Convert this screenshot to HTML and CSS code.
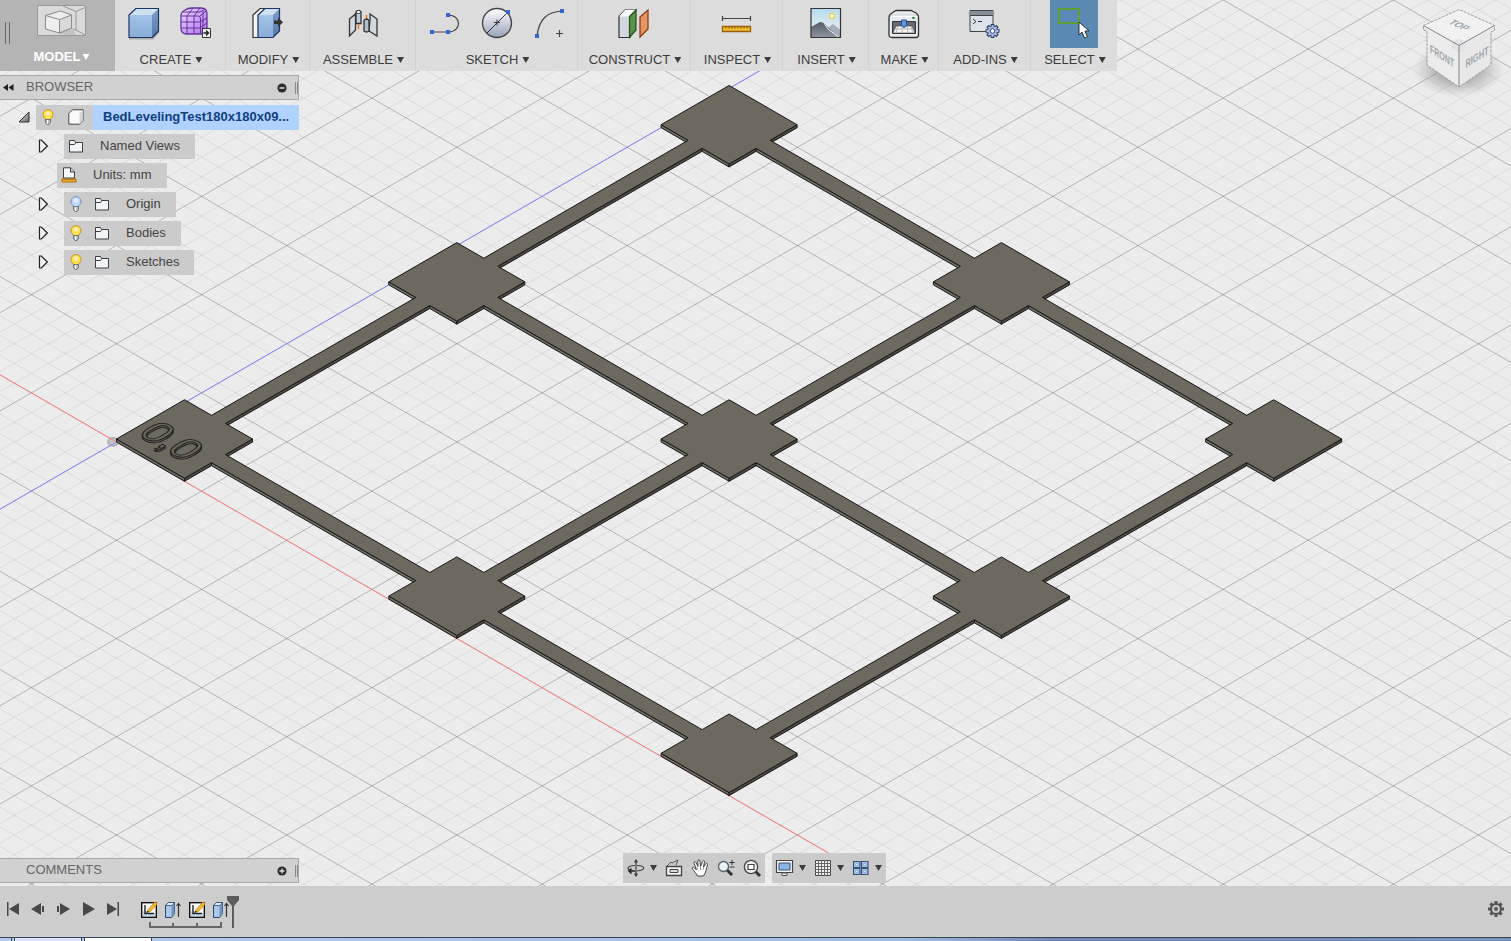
FILE: index.html
```html
<!DOCTYPE html>
<html lang="en">
<head>
<meta charset="utf-8">
<title>BedLevelingTest180x180x09</title>
<link rel="stylesheet" href="styles.css">
</head>
<body>
<svg class="defs" width="0" height="0" aria-hidden="true">
  <defs>
    <linearGradient id="blueFace" x1="0" y1="0" x2="0" y2="1"><stop offset="0" stop-color="#a3c3e8"/><stop offset="1" stop-color="#87add9"/></linearGradient>
    <linearGradient id="blueSide" x1="0" y1="0" x2="0" y2="1"><stop offset="0" stop-color="#7d9fcb"/><stop offset="1" stop-color="#5878a6"/></linearGradient>
    <linearGradient id="steel" x1="0" y1="0" x2="0" y2="1"><stop offset="0" stop-color="#ffffff"/><stop offset="1" stop-color="#98a2b8"/></linearGradient>
    <linearGradient id="purple" x1="0" y1="0" x2="1" y2="1"><stop offset="0" stop-color="#eedcff"/><stop offset=".45" stop-color="#d0a9fa"/><stop offset="1" stop-color="#b070f0"/></linearGradient>
    <linearGradient id="sky" x1="0" y1="0" x2="0" y2="1"><stop offset="0" stop-color="#b4dcf2"/><stop offset="1" stop-color="#f5f4e6"/></linearGradient>
    <linearGradient id="rock" x1="0" y1="0" x2="0" y2="1"><stop offset="0" stop-color="#565a66"/><stop offset="1" stop-color="#8f95a3"/></linearGradient>
    <linearGradient id="corner" x1="0" y1="0" x2="1" y2="1"><stop offset="0" stop-color="#eee"/><stop offset="1" stop-color="#666"/></linearGradient>
    <radialGradient id="shade"><stop offset="0" stop-color="#777" stop-opacity=".9"/><stop offset=".5" stop-color="#888" stop-opacity=".5"/><stop offset="1" stop-color="#999" stop-opacity="0"/></radialGradient>
    <symbol id="bulb" viewBox="0 0 16 16">
      <path d="M8 .6a5 5 0 0 0-5 5c0 2.300 2 3 2.500 5.200h5C11 8.600 13 7.900 13 5.600a5 5 0 0 0-5-5z" fill="var(--glow)" stroke="var(--rim)"/>
      <path d="M6 3.500c1-1.500 3-1.500 4 0v3H6z" fill="#fff" opacity=".55"/>
      <path d="M5.500 10.500h5v3l-1.500 2H7l-1.500-2z" fill="#b5bac4" stroke="#5d6470" stroke-width=".8"/><path d="M7.500 11v4" stroke="#fff"/>
    </symbol>
    <symbol id="folder" viewBox="0 0 16 16">
      <path d="M1.500 14V2.500h5l1 2h7V14z" fill="#f3f4f6" stroke="#3c3f45"/><path d="M2 6.500h4.500l1.500-2" fill="none" stroke="#3c3f45"/>
    </symbol>
    <symbol id="expand" viewBox="0 0 10 14"><path d="M1.500 1h1.800l6 6-6 6H1.500z" fill="#f3f3f3" stroke="#222" stroke-width="1.200"/></symbol>
    <symbol id="sketchStep" viewBox="0 0 18 18">
      <rect x="1.700" y="1.700" width="14.600" height="14.600" fill="#fff" stroke="#111" stroke-width="1.400"/>
      <path d="M3 10h4v5H3zM8 12h7v3H8z" fill="#b5d6f0"/><path d="M5 4v8.500h9" fill="none" stroke="#222" stroke-width="1.400"/>
      <path d="M7 11.500l1.200-3 6.300-7 2.300 2-6.500 7z" fill="#f6b81c" stroke="#a87410" stroke-width=".6"/><path d="M14 2l1-1.500 2.500 2-1 1.500z" fill="#f0933a"/><path d="M6.500 12l1-2.500L9 11z" fill="#333"/>
    </symbol>
    <symbol id="extrudeStep" viewBox="0 0 18 18">
      <path d="M1.500 4.500l3-3h6v11l-3 4h-6z" fill="#a9c8ea" stroke="#2c4668"/><path d="M1.500 4.500l3-3h6l-3 3z" fill="#e4eff9" stroke="#2c4668" stroke-width=".8"/><path d="M7.500 4.500v12l3-4v-11z" fill="#6f93c3"/>
      <path d="M14.500 16V3M12.500 5l2-2.500 2 2.500" fill="none" stroke="#333" stroke-width="1.200"/>
    </symbol>
  </defs>
</svg>

<main class="viewport">
  <svg class="scene" viewBox="0 0 1511 886" preserveAspectRatio="xMidYMid slice" role="img" aria-label="Bed leveling test model">
    <path id="gridMinor" class="grid-minor"/>
    <path id="gridMajor" class="grid-major"/>
    <ellipse class="origin-ring" cx="113" cy="442" rx="5" ry="4"/>
    <path class="axis-x" d="M-200 259.400L828 852.800"/>
    <path class="axis-z" d="M-200 624.600L800 47.500"/>
    <g id="model"></g>
    <g class="emboss">
      <text class="emboss-side" transform="matrix(1 .577 -1 .577 136.500 435.500)">0,0</text>
      <text class="emboss-top" transform="matrix(1 .577 -1 .577 136.500 433.500)">0,0</text>
    </g>
  </svg>

  <header class="toolbar">
    <section class="workspace">
      <span class="grip"></span>
      <button class="workspace-button">
        <svg width="50" height="32" viewBox="0 0 50 32"><path d="M.5.5h48v30H.5z" fill="#dadada" stroke="#989898"/><path d="M26 1l13 5.500 9-4M39 6.500V25l9 5M39 25l-8-2" fill="none" stroke="#989898"/><path d="M22 28l13-6 4 8H27z" fill="#c3c3c3"/><path d="M8.500 10.500l15-4.500L34.500 10v13L22.500 28 8.500 24z" fill="#eee" stroke="#8c8c8c"/><path d="M22.500 14.500l12-4.500v13l-12 5z" fill="#d9d9d9" stroke="#8c8c8c"/><path d="M8.500 10.500l14 4" stroke="#8c8c8c"/></svg>
        <span class="label">MODEL<i class="caret"></i></span>
      </button>
    </section>
    <section class="group create">
      <div class="tools">
        <button class="tool" aria-label="Box"><svg class="tool-icon" viewBox="0 0 34 34"><path d="M2 31.500h24l6-7" fill="none" stroke="#aaa" stroke-width="2"/><path d="M2 8l7-6.500h22.500L25 8z" fill="#cfe0f1"/><path d="M2 8h23v22.500H2z" fill="url(#blueFace)"/><path d="M25 8l6.500-6.500V24L25 30.500z" fill="url(#blueSide)"/><path d="M2 8l7-6.500h22.500V24L25 30.500H2z" fill="none" stroke="#1d3563" stroke-width="1.200" stroke-linejoin="round"/></svg></button>
        <button class="tool" aria-label="Create form"><svg class="tool-icon" viewBox="0 0 34 34"><path d="M2 9q0-4 4-6 3-2 7-2h9q6 0 6 6v13q0 7-7 7H8q-6 0-6-6z" fill="url(#purple)" stroke="#65339a" stroke-width="1.300"/><path d="M2.500 9h17q2 0 2 3v14M2.500 15H21l7-4M2.500 21H21l7-5M8 9v18M15 9v18M4 5h17l5-3M21 9l6-5M8 9l6-8M15 9l6-8M24 4v21" fill="none" stroke="#65339a"/><path d="M23.500 21.500h8v9h-8z" fill="#f4f4f4" stroke="#333"/><path d="M24.500 26h5M27 23.500l2.500 2.500-2.500 2.500" fill="none" stroke="#222" stroke-width="1.400"/></svg></button>
      </div>
      <button class="label">CREATE<i class="caret"></i></button>
    </section>
    <section class="group modify">
      <div class="tools"><button class="tool" aria-label="Press pull"><svg class="tool-icon" viewBox="0 0 34 34"><path d="M2 8l7-6.500h5L7.500 8v22.500H2z" fill="#f3f3f4" stroke="#333" stroke-width="1.200"/><path d="M7 8l7-6.500h14.500L23 8z" fill="#cfe0f1"/><path d="M7 8h15v22.500H7z" fill="url(#blueFace)"/><path d="M22 8l6.500-6.500V24L22 30.500z" fill="url(#blueSide)"/><path d="M7 8l7-6.500h14.500V24L22 30.500H7z" fill="none" stroke="#1d3563" stroke-width="1.200"/><path d="M23 13.500h4v-3l5 4.800-5 4.700v-3h-4z" fill="#333"/></svg></button></div>
      <button class="label">MODIFY<i class="caret"></i></button>
    </section>
    <section class="group assemble">
      <div class="tools"><button class="tool" aria-label="Joint"><svg class="tool-icon" viewBox="0 0 34 34"><path d="M3.500 12l6-5v16l-6 6z" fill="#d2d8df" stroke="#333" stroke-width="1.300"/><path d="M10 5q2.500-3 5 0v11.500h-5z" fill="#c5ccd7" stroke="#333" stroke-width="1.300"/><ellipse cx="12.500" cy="5" rx="2.500" ry="1.500" fill="#fff" stroke="#333"/><path d="M12.500 17v5M20.500 8v5" stroke="#ef7417" stroke-width="1.500"/><path d="M24 13V7l7 5v17l-8-5z" fill="#d2d8df" stroke="#333" stroke-width="1.300"/><path d="M18 13.500q2.500-3 5 0V24q-2.500 2-5 0z" fill="#b6bfcc" stroke="#333" stroke-width="1.300"/></svg></button></div>
      <button class="label">ASSEMBLE<i class="caret"></i></button>
    </section>
    <section class="group sketch">
      <div class="tools">
        <button class="tool" aria-label="Line"><svg class="tool-icon" viewBox="0 0 34 34"><path d="M4 25h16c14 0 14-17 0-17" fill="none" stroke="#444" stroke-width="1.200"/><path d="M2 23h4v4H2zM18 23h4v4h-4zM18 6h4v4h-4z" fill="#3167cf"/></svg></button>
        <button class="tool" aria-label="Circle"><svg class="tool-icon" viewBox="0 0 34 34"><circle cx="17" cy="16" r="14.500" fill="url(#steel)" stroke="#444" stroke-width="1.300"/><path d="M7 26L28 5M14 15.500h6M17 12.500v6" stroke="#333"/><path d="M26 3h4v4h-4z" fill="#3167cf"/></svg></button>
        <button class="tool" aria-label="Arc"><svg class="tool-icon" viewBox="0 0 34 34"><path d="M5 29C7 12 15 5 30 4M24 26.500h7M27.500 23v7" fill="none" stroke="#444" stroke-width="1.200"/><path d="M3 27h4v4H3zM28 2h4v4h-4z" fill="#3167cf"/></svg></button>
      </div>
      <button class="label">SKETCH<i class="caret"></i></button>
    </section>
    <section class="group construct">
      <div class="tools"><button class="tool" aria-label="Offset plane"><svg class="tool-icon" viewBox="0 0 34 34"><path d="M2 9.500L8 3h11l-6 6.500V30.500H2z" fill="#d3d8e0" stroke="#333" stroke-width="1.200"/><path d="M2 9.500L8 3h11l-6 6.500z" fill="#fbfbfb"/><path d="M12.500 9.500L19 3v20l-6.500 7.500z" fill="#569447" stroke="#234d1c" stroke-width="1.200"/><path d="M23 10l8-7v19l-8 8z" fill="#e59562" stroke="#873410" stroke-width="1.200"/></svg></button></div>
      <button class="label">CONSTRUCT<i class="caret"></i></button>
    </section>
    <section class="group inspect">
      <div class="tools"><button class="tool" aria-label="Measure"><svg class="tool-icon" viewBox="0 0 34 34"><path d="M2.500 9v5M30.500 9v5M2.500 11.500h28" stroke="#444" stroke-width="1.200"/><path d="M2.500 19.500h28v5h-28z" fill="#edc22e" stroke="#9b5b0b" stroke-width="1.300"/><path d="M6 20v2M9 20v2M12 20v2M15 20v2M18 20v2M21 20v2M24 20v2M27 20v2" stroke="#8a5510" stroke-width=".8"/></svg></button></div>
      <button class="label">INSPECT<i class="caret"></i></button>
    </section>
    <section class="group insert">
      <div class="tools"><button class="tool" aria-label="Insert image"><svg class="tool-icon" viewBox="0 0 34 34"><path d="M2 1.500h29.500v29H2z" fill="url(#sky)"/><path d="M19 21l5-4 7.500 6v7.500H20z" fill="#a6adb8"/><path d="M2 20l9-5 4 1 6 6 9 8.500H2z" fill="url(#rock)"/><path d="M15 16l4 6 11 8.500" fill="none" stroke="#f5f5f5"/><circle cx="23" cy="9" r="2.500" fill="#fff" stroke="#f3cf58" stroke-width="1.500"/><path d="M2 1.500h29.500v29H2z" fill="none" stroke="#333" stroke-width="1.200"/></svg></button></div>
      <button class="label">INSERT<i class="caret"></i></button>
    </section>
    <section class="group make">
      <div class="tools"><button class="tool" aria-label="3D print"><svg class="tool-icon" viewBox="0 0 34 34"><path d="M2 10q0-2 3-4l4-2.500h15L29 6q2.500 2 2.500 4v18q0 2.500-2.500 2.500H5Q2 30.500 2 28z" fill="#e8ebf0" stroke="#333" stroke-width="1.300"/><path d="M3 10q1-2 3-2h21q3 0 4 2" fill="#fff" stroke="#c5cad3"/><path d="M5.500 14.500h23v12h-23z" fill="#646b77" stroke="#333"/><path d="M9 19h16l3 7H6z" fill="#f3f3f3" stroke="#444" stroke-width=".6"/><path d="M11 19l-2 7M15 19v7M20 19l1 7M24 19l2 7M7.500 22h19" stroke="#999" stroke-width=".6"/><path d="M14.500 13h5v5l-2.500 3-2.500-3z" fill="#5a94e4" stroke="#1c4382" stroke-width=".8"/><path d="M25.500 10h2v2h-2z" fill="#087d0e"/></svg></button></div>
      <button class="label">MAKE<i class="caret"></i></button>
    </section>
    <section class="group addins">
      <div class="tools"><button class="tool" aria-label="Scripts"><svg class="tool-icon" viewBox="0 0 34 34"><path d="M2 3.500h23v21H2z" fill="#dce1ea" stroke="#444"/><path d="M2.500 4h22v4h-22z" fill="#858d9a"/><path d="M2 8.500h23" stroke="#444"/><path d="M5 12l3 2.500L5 17M10 14.500h4" fill="none" stroke="#333"/><path d="M24.500 17v14M17.500 24h14M19.500 19l10 10M29.500 19l-10 10" stroke="#263b64" stroke-width="3.600"/><circle cx="24.500" cy="24" r="5" fill="#9db6df" stroke="#263b64"/><path d="M24.500 18v12M18.500 24h12M20.300 19.800l8.400 8.400M28.700 19.800l-8.400 8.400" stroke="#a9c0e5" stroke-width="1.800"/><circle cx="24.500" cy="24" r="2.300" fill="#fff" stroke="#35496f"/></svg></button></div>
      <button class="label">ADD-INS<i class="caret"></i></button>
    </section>
    <section class="group select">
      <div class="tools"><button class="tool active" aria-label="Select"><svg class="tool-icon" viewBox="0 0 34 34"><path d="M1.500 2h20.500v14H1.500z" fill="none" stroke="#62a30e" stroke-width="1.500"/><path d="M22 15v13l3-3 2.500 6 2.800-1.200L28 24h4z" fill="#fff" stroke="#222" stroke-width=".9"/></svg></button></div>
      <button class="label">SELECT<i class="caret"></i></button>
    </section>
  </header>

  <nav class="browser" aria-label="Browser">
    <div class="panel-head">
      <button class="collapse" aria-label="Collapse"><svg width="11" height="7" viewBox="0 0 11 7"><path d="M5 0v7L0 3.500zM10.500 0v7L5.500 3.500z" fill="#222"/></svg></button>
      <h2 class="panel-title">BROWSER</h2>
      <button class="round" aria-label="Hide panel"><svg width="10" height="10" viewBox="0 0 10 10"><circle cx="5" cy="5" r="4.600" fill="#2d2d2d"/><path d="M2.500 5h5" stroke="#ddd" stroke-width="1.500"/></svg></button>
      <span class="panel-grip"></span>
    </div>
    <ul class="tree">
      <li class="row root"><button class="toggle" aria-label="Toggle root"><svg width="12" height="12" viewBox="0 0 12 12"><path d="M11 1v10H1z" fill="url(#corner)" stroke="#333"/></svg></button>
        <span class="chip"><svg class="icon lit"><use href="#bulb"/></svg><svg class="icon" viewBox="0 0 16 16"><path d="M.8 4.500L4.500.8h10.700v10.700l-3.700 3.700H.8z" fill="#f8f8f8" stroke="#444"/><path d="M11.500 4.500l3.700-3.700v10.700l-3.700 3.700z" fill="#cfd2d8"/></svg></span><span class="root-name">BedLevelingTest180x180x09...</span></li>
      <li class="row"><button class="toggle" aria-label="Expand Named Views"><svg class="arrow"><use href="#expand"/></svg></button><span class="chip"><svg class="icon"><use href="#folder"/></svg><span class="name">Named Views</span></span></li>
      <li class="row units"><span class="chip"><svg class="icon" viewBox="0 0 16 16"><path d="M2.500 11V.8h7L13.500 5v6z" fill="#f7f8fa" stroke="#3c3f45"/><path d="M9.500.8V5h4" fill="#ccd0d6" stroke="#3c3f45"/><path d="M1 12h14v3H1z" fill="#f2c230" stroke="#b3660b"/><path d="M3 12v1.500M5 12v1.500M7 12v1.500M9 12v1.500M11 12v1.500M13 12v1.500" stroke="#8d5510" stroke-width=".7"/></svg><span class="name">Units: mm</span></span></li>
      <li class="row"><button class="toggle" aria-label="Expand Origin"><svg class="arrow"><use href="#expand"/></svg></button><span class="chip"><svg class="icon unlit"><use href="#bulb"/></svg><svg class="icon"><use href="#folder"/></svg><span class="name">Origin</span></span></li>
      <li class="row"><button class="toggle" aria-label="Expand Bodies"><svg class="arrow"><use href="#expand"/></svg></button><span class="chip"><svg class="icon lit"><use href="#bulb"/></svg><svg class="icon"><use href="#folder"/></svg><span class="name">Bodies</span></span></li>
      <li class="row"><button class="toggle" aria-label="Expand Sketches"><svg class="arrow"><use href="#expand"/></svg></button><span class="chip"><svg class="icon lit"><use href="#bulb"/></svg><svg class="icon"><use href="#folder"/></svg><span class="name">Sketches</span></span></li>
    </ul>
  </nav>

  <svg class="viewcube" width="111" height="110" viewBox="0 0 111 110" role="img" aria-label="View cube">
    <ellipse cx="58" cy="70" rx="46" ry="27" fill="url(#shade)"/>
    <path d="M23.500 25.500L59 45.500V87L27 65V31l-3.500-1z" fill="#ececec"/><path d="M59 45.500l35.500-20v5L91 32v33L59 87z" fill="#e8e8e8"/><path d="M23.500 25.500L59 9.500l35.500 16-35.500 20z" fill="#f1f1f1"/>
    <path d="M52 42l7-3.500L66 42v7l-7 4-7-4z" fill="#e0e2e5"/>
    <path d="M23.500 25.500L59 9.500l35.500 16v5L91 32v33L59 87 27 65V31l-3.500-1z" fill="none" stroke="#999" stroke-width=".9" stroke-dasharray="3 1"/><path d="M23.500 25.500l35.500 20 35.500-20M59 45.500V87" fill="none" stroke="#858585"/>
    <text class="cube-text" text-anchor="middle" transform="matrix(.75 .35 -.85 .48 56 27)">TOP</text>
    <text class="cube-text" text-anchor="middle" transform="matrix(.64 .4 0 1.050 42 60)">FRONT</text>
    <text class="cube-text" text-anchor="middle" transform="matrix(.68 -.42 0 1.050 77 61)">RIGHT</text>
  </svg>

  <div class="bottom-row">
    <div class="panel-head comments">
      <h2 class="panel-title">COMMENTS</h2>
      <button class="round" aria-label="Show comments"><svg width="10" height="10" viewBox="0 0 10 10"><circle cx="5" cy="5" r="4.600" fill="#2d2d2d"/><path d="M2.500 5h5M5 2.500v5" stroke="#ddd" stroke-width="1.300"/></svg></button>
      <span class="panel-grip"></span>
    </div>
    <div class="nav">
      <div class="nav-set">
        <button class="nav-button menu" aria-label="Orbit"><svg class="nav-icon" viewBox="0 0 20 20"><path d="M11 7.500c9 .5 9 4.500 0 5.500M9 7.500c-5 0-7 1.500-7 3 0 1 1 2 2.500 2.500" fill="none" stroke="#444" stroke-width="1.200"/><path d="M3 13h6M5.500 10.500L3 13l2.500 2.500" fill="none" stroke="#222" stroke-width="1.600"/><path d="M10 2v16M8.500 4.500L10 2l1.500 2.500M8.500 15.500L10 18l1.500-2.500" fill="none" stroke="#444" stroke-width="1.200"/></svg><i class="caret"></i></button>
        <button class="nav-button" aria-label="Look at"><svg class="nav-icon" viewBox="0 0 20 20"><path d="M2.500 8.500h15v9h-15z" fill="#f5f5f5" stroke="#444" stroke-width="1.300"/><path d="M6 11.500h8v3H6z" fill="#ddd" stroke="#444"/><path d="M3 8l4-4 1 1 6-3-2 5" fill="none" stroke="#555"/></svg></button>
        <button class="nav-button" aria-label="Pan"><svg class="nav-icon" viewBox="0 0 20 20"><path d="M7.500 18C6 15 4 13 2.500 11c-1-1.500.8-2.200 2-1L6.500 12 4 5c-.5-1.700 1.400-2 2-.5l2 4L7.800 3c0-1.600 2-1.600 2.200 0l.5 5.500L12.500 3.500c.5-1.500 2.300-1 2 .5l-1 5 2.300-3.200c1-1 2.200 0 1.700 1.200C16 10.500 16.500 14 13.500 18z" fill="#fff" stroke="#444"/><path d="M7 9v3M10.500 8.500V12M13.500 9l-.5 3" stroke="#999"/></svg></button>
        <button class="nav-button" aria-label="Zoom"><svg class="nav-icon" viewBox="0 0 20 20"><path d="M11 12l5 5" stroke="#333" stroke-width="3"/><circle cx="7.500" cy="8.500" r="5" fill="#e9f1f7" stroke="#57626b" stroke-width="1.300"/><path d="M13.500 4.500h5M16 2v5M13.500 9h5" stroke="#333"/></svg></button>
        <button class="nav-button" aria-label="Fit"><svg class="nav-icon" viewBox="0 0 20 20"><path d="M13 13l5 5" stroke="#333" stroke-width="3"/><circle cx="9" cy="9" r="6.700" fill="#e8edf0" stroke="#444" stroke-width="1.300"/><path d="M6 6.500h6v5H6z" fill="#fff" stroke="#444" stroke-width="1.200"/></svg></button>
      </div>
      <div class="nav-set">
        <button class="nav-button menu" aria-label="Display settings"><svg class="nav-icon" viewBox="0 0 20 20"><path d="M1.500 2.500h16v12h-16z" fill="#f5f5f5" stroke="#444" stroke-width="1.200"/><path d="M4 5h11v7H4z" fill="#8db5e2" stroke="#34547e"/><path d="M7 15h5v2.500H7z" fill="#fff" stroke="#555"/></svg><i class="caret"></i></button>
        <button class="nav-button menu" aria-label="Grid and snaps"><svg class="nav-icon" viewBox="0 0 20 20"><path d="M2.500 2.500h15v15h-15z" fill="#f3f3f3" stroke="#444"/><path d="M5.500 2v16M8.500 2v16M11.500 2v16M14.500 2v16M2 5.500h16M2 8.500h16M2 11.500h16M2 14.500h16" stroke="#666"/></svg><i class="caret"></i></button>
        <button class="nav-button menu" aria-label="Viewports"><svg class="nav-icon" viewBox="0 0 20 20"><path d="M2.500 3.500H9v6H2.500zM10.500 3.500H17v6h-6.500zM2.500 10.500H9v6H2.500zM10.500 10.500H17v6h-6.500z" fill="#a6c5ec" stroke="#34517d" stroke-width="1.100"/><path d="M4.500 5.500H7v2H4.500zM12.500 5.500H15v2h-2.500zM4.500 12.500H7v2H4.500zM12.500 12.500H15v2h-2.500z" fill="#dceafa" stroke="#7c9ccb" stroke-width=".6"/></svg><i class="caret"></i></button>
      </div>
    </div>
  </div>
</main>

<footer class="timeline">
  <div class="playback">
    <button class="play" aria-label="To start"><svg viewBox="0 0 14 14"><path d="M1 0h1.500v14H1zM13 1v12L3 7z"/></svg></button>
    <button class="play" aria-label="Step back"><svg viewBox="0 0 14 14"><path d="M10 1v12L0 7zM11 4h2v6h-2z"/></svg></button>
    <button class="play" aria-label="Step forward"><svg viewBox="0 0 14 14"><path d="M4 1v12l10-6zM1 4h2v6H1z"/></svg></button>
    <button class="play" aria-label="Play"><svg viewBox="0 0 14 14"><path d="M2 0v14l12-7z"/></svg></button>
    <button class="play" aria-label="To end"><svg viewBox="0 0 14 14"><path d="M11.500 0H13v14h-1.500zM1 1v12l10-6z"/></svg></button>
  </div>
  <div class="history">
    <div class="steps">
      <button class="step" aria-label="Sketch 1"><svg width="18" height="18"><use href="#sketchStep"/></svg></button>
      <button class="step" aria-label="Extrude 1"><svg width="18" height="18"><use href="#extrudeStep"/></svg></button>
      <button class="step" aria-label="Sketch 2"><svg width="18" height="18"><use href="#sketchStep"/></svg></button>
      <button class="step" aria-label="Extrude 2"><svg width="18" height="18"><use href="#extrudeStep"/></svg></button>
    </div>
    <svg class="bracket" width="96" height="8" viewBox="0 0 96 8"><path d="M13 0v5h71V0M36 5V1M60 5V1" fill="none" stroke="#666" stroke-width="2"/></svg>
    <svg class="marker" width="12" height="32" viewBox="0 0 12 32"><path d="M0 0h12v4L7 10v22H5V10L0 4z" fill="#5c5c5c"/></svg>
  </div>
  <button class="settings" aria-label="Timeline settings"><svg width="16" height="16" viewBox="0 0 16 16"><path d="M8 0v16M0 8h16M2.400 2.400l11.200 11.200M13.600 2.400L2.400 13.600" stroke="#555" stroke-width="3"/><circle cx="8" cy="8" r="5" fill="#ccc" stroke="#555" stroke-width="2.200"/><circle cx="8" cy="8" r="2" fill="#555"/></svg></button>
</footer>
<div class="taskbar"><span class="task-edge"></span><span class="task"></span><span class="task bright"></span></div>
<script src="scene.js"></script>
</body>
</html>
```
FILE: styles.css
```css
* { box-sizing: border-box; }
body {
  margin: 0;
  height: 100vh;
  display: flex;
  flex-direction: column;
  overflow: hidden;
  background: #ececec;
  color: #3c3c3c;
  font: 13px/18px "Liberation Sans", Arial, sans-serif;
}
button { padding: 0; border: 0; background: none; color: inherit; font: inherit; }
svg { display: block; flex: none; }
.defs { position: absolute; }

.viewport { position: relative; flex: 1; min-height: 0; display: flex; flex-direction: column; align-items: flex-start; }
.scene { position: absolute; inset: 0; width: 100%; height: 100%; }
.toolbar, .browser, .bottom-row { position: relative; }

.grid-minor, .grid-major { fill: none; stroke: #000; stroke-width: 1px; }
.grid-minor { stroke-opacity: .07; }
.grid-major { stroke-opacity: .24; }
.axis-x { stroke: #ff8080; }
.axis-z { stroke: #8888ff; }
.origin-ring { fill: #c4c4c4; stroke: #b3b3b3; stroke-width: 2px; }
.face-top { fill: #6d695f; stroke: #181816; stroke-width: 1px; }
.face-left { fill: #6c6f68; stroke: #181816; stroke-width: 1px; }
.face-right { fill: #4f4a45; stroke: #181816; stroke-width: 1px; }
.emboss { font-size: 34px; stroke: #1c1c1a; }
.emboss text { vector-effect: non-scaling-stroke; }
.emboss-side { fill: #5b574f; }
.emboss-top { fill: #6d695f; }

.toolbar { display: flex; height: 71px; background: #dcdcdc; }
.workspace { display: flex; align-items: flex-start; width: 115px; padding-left: 5px; background: #b4b4b4; }
.grip { width: 5px; height: 22px; margin-top: 22px; border: solid #6a6a6a; border-width: 0 1px; }
.workspace-button { flex: 1; display: flex; flex-direction: column; align-items: center; gap: 11px; padding: 5px 2px 0 0; color: #fff; font-weight: bold; }
.workspace-button .label { margin: 0; padding: 0; gap: 2px; }
.group { display: flex; flex-direction: column; align-items: center; border-right: 1px solid #d2d2d2; }
.group:last-child { border-right: 0; }
.create { width: 111px; }
.modify { width: 84px; }
.assemble { width: 106px; }
.sketch { width: 162px; }
.construct { width: 113px; }
.inspect { width: 92px; }
.insert { width: 86px; }
.make { width: 70px; }
.addins { width: 92px; }
.select { width: 86px; }
.tools { display: flex; gap: 4px; }
.tool { display: grid; place-items: center; width: 48px; height: 48px; }
.tool.active { background: #5a8ab4; }
.tool-icon { width: 34px; height: 34px; }
.label { display: flex; align-items: center; gap: 4px; margin-top: 3px; padding-left: 2px; white-space: nowrap; }
.caret { flex: none; width: 7px; height: 6px; background: currentColor; clip-path: polygon(0 0, 100% 0, 50% 100%); }

.browser { width: 299px; margin-top: 4px; }
.panel-head { display: flex; align-items: center; width: 299px; height: 25px; padding: 0 0 0 3px; background: #d1d1d1; border: 1px solid #a8a8a8; border-left: 0; }
.collapse { width: 23px; }
.panel-title { flex: 1; margin: 0; padding-bottom: 1px; color: #666; font-size: 13px; font-weight: normal; }
.round { margin-right: 8px; }
.panel-grip { width: 3px; height: 12px; border: solid #888; border-width: 0 1px; }
.comments { padding-left: 26px; }

.tree { display: flex; flex-direction: column; gap: 4px; margin: 5px 0 0; padding: 0; list-style: none; }
.row { display: flex; height: 25px; padding-left: 38px; }
.toggle { width: 26px; padding-bottom: 1px; }
.root { padding-left: 18px; }
.root .toggle { width: 18px; }
.units { padding-left: 57px; }
.arrow { width: 10px; height: 14px; }
.icon { width: 16px; height: 16px; }
.lit { --glow: #ffe14d; --rim: #c8952b; }
.unlit { --glow: #c3d8ff; --rim: #7590c4; }
.chip { display: flex; align-items: center; gap: 10px; padding: 0 15px 1px 4px; background: #cbcbcb; }
.name { padding-left: 6px; color: #444; }
.root .chip { gap: 12px; padding-right: 9px; }
.root-name { flex: 1; display: flex; align-items: center; padding: 0 0 1px 10px; background: #b0d2ff; color: #103f80; font-weight: bold; white-space: nowrap; }

.viewcube { position: absolute; top: 0; right: 0; }
.cube-text { fill: #a0a5ab; font-size: 11px; font-weight: bold; }

.bottom-row { display: grid; grid-template-columns: 1fr auto 1fr; align-items: end; width: 100%; margin-top: auto; padding: 0 3px 3px 0; }
.nav { display: flex; gap: 7px; }
.nav-set { display: flex; height: 30px; background: #cbcbcb; }
.nav-button { display: flex; align-items: center; justify-content: center; width: 26px; }
.nav-button.menu { width: 38px; gap: 4px; }
.nav-icon { width: 20px; height: 20px; }

.timeline { display: flex; align-items: flex-start; height: 51px; background: #cdcdcd; }
.playback { display: flex; padding-top: 10px; }
.play { display: grid; place-items: center; width: 25px; height: 25px; }
.play svg { width: 14px; height: 14px; fill: #484848; }
.history { position: relative; margin-left: 12px; padding-top: 14px; }
.steps { display: flex; }
.step { display: grid; place-items: center; width: 24px; height: 20px; }
.bracket { margin-top: 2px; }
.marker { position: absolute; top: 10px; left: 90px; }
.settings { margin: 15px 7px 0 auto; }

.taskbar { display: flex; gap: 2px; height: 4px; border-top: 1px solid #34475f; background: linear-gradient(90deg, #b4cce8, #a2bddb 60%, #7186b0 70%, #7a94b8); }
.task-edge { width: 12px; border-right: 1px solid #34475f; }
.task { width: 68px; background: #dbe7f5; border: solid #34475f; border-width: 0 1px; }
.bright { background: #fff; }
```
FILE: scene.js
```js
// Isometric frame: a runs along the red axis, b along the blue axis.
const ORIGIN = { x: 116.5, y: 439 };
const SLOPE = 0.5771;
const THICKNESS = 3;
const PLATE = 68;
const BAR = [27, 41];
const PITCH = 272.3;
const COUNT = 3;

function project([a, b], drop = 0) {
  return (ORIGIN.x + a + b).toFixed(2) + " " + (ORIGIN.y + (a - b) * SLOPE + drop).toFixed(2);
}

function gridPath(step, skip) {
  let d = "";
  for (let k = -120; k <= 120; k++) {
    if (skip && k % skip === 0) continue;
    const base = ORIGIN.y + THICKNESS + k * step;
    const left = (0 - ORIGIN.x) * SLOPE;
    const right = (1511 - ORIGIN.x) * SLOPE;
    d += `M0 ${base + left}L1511 ${base + right}M0 ${base - left}L1511 ${base - right}`;
  }
  return d;
}

// One side of the outer boundary, walked from the first plate to the last.
function sidePoints() {
  const points = [];
  for (let i = 0; i < COUNT; i++) {
    const start = i * PITCH;
    if (i) points.push([start, BAR[0]], [start, 0]);
    else points.push([0, 0]);
    if (i < COUNT - 1) points.push([start + PLATE, 0], [start + PLATE, BAR[0]]);
  }
  return points;
}

function outerLoop() {
  const size = (COUNT - 1) * PITCH + PLATE;
  const side = sidePoints();
  return [
    ...side,
    ...side.map(([u, v]) => [size - v, u]),
    ...side.map(([u, v]) => [size - u, size - v]),
    ...side.map(([u, v]) => [v, size - u]),
  ];
}

function holeLoop(i, j) {
  const a = i * PITCH, b = j * PITCH;
  const l = BAR[1], p = PLATE, n = PITCH, h = PITCH + BAR[0];
  return [[l, p], [l, n], [p, n], [p, h], [n, h], [n, n], [h, n], [h, p], [n, p], [n, l], [p, l], [p, p]]
    .map(([u, v]) => [a + u, b + v]);
}

const loops = [outerLoop()];
for (let i = 0; i < COUNT - 1; i++) {
  for (let j = 0; j < COUNT - 1; j++) loops.push(holeLoop(i, j));
}

const model = document.getElementById("model");
function addPath(d, className) {
  const path = document.createElementNS("http://www.w3.org/2000/svg", "path");
  path.setAttribute("d", d);
  path.setAttribute("class", className);
  model.appendChild(path);
}

for (const loop of loops) {
  loop.forEach((p, i) => {
    const q = loop[(i + 1) % loop.length];
    const alongA = q[0] - p[0] > 1;
    const alongB = q[1] - p[1] > 1;
    if (!alongA && !alongB) return;
    addPath(`M${project(p)}L${project(q)}L${project(q, THICKNESS)}L${project(p, THICKNESS)}Z`,
      alongA ? "face-left" : "face-right");
  });
}
addPath(loops.map(loop => "M" + loop.map(p => project(p)).join("L") + "Z").join(""), "face-top");

document.getElementById("gridMinor").setAttribute("d", gridPath(19.65, 5));
document.getElementById("gridMajor").setAttribute("d", gridPath(98.25, 0));
```
